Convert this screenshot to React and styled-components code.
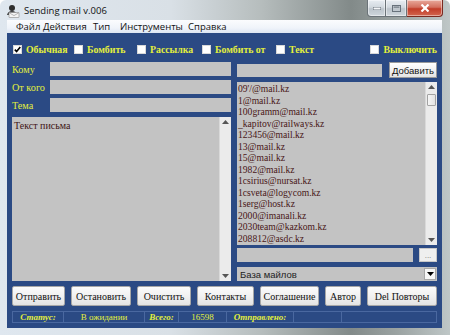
import React from 'react';
import styled, { createGlobalStyle } from 'styled-components';

const serif = `"Liberation Serif", "Times New Roman", serif`;
const sans = `"Liberation Sans", Arial, sans-serif`;
const ui = `"Open Sans", "Noto Sans", sans-serif`;

const yellow = '#e3ef3c';
const fieldGray = '#c3c3c3';

const GlobalStyle = createGlobalStyle`
  html, body {
    margin: 0;
    padding: 0;
    background: #ffffff;
  }
  body {
    width: 450px;
    height: 335px;
    overflow: hidden;
  }
`;

const Window = styled.div`
  width: 450px;
  height: 335px;
  box-sizing: border-box;
  display: flex;
  flex-direction: column;
  border-radius: 6px 6px 0 0;
  background: linear-gradient(90deg, #dfe7ef 0%, #d9e0e6 38%, #b6bdbd 58%, #828a89 78%, #9aa2a1 88%, #bfc7c7 100%);
  overflow: hidden;
`;

const TitleBar = styled.div`
  height: 20px;
  display: flex;
  align-items: flex-start;
  flex-shrink: 0;
`;

const AppIcon = styled.div`
  width: 14px;
  height: 14px;
  margin: 4px 0 0 6px;

  svg {
    display: block;
  }
`;

const Title = styled.div`
  margin: 4px 0 0 4px;
  font-family: ${ui};
  font-size: 9.5px;
  line-height: 14px;
  color: #111;
`;

const Caption = styled.div`
  display: flex;
  margin-left: auto;
  margin-right: 7px;
`;

const CapButton = styled.div`
  width: ${(p) => p.$w}px;
  height: 17px;
  box-sizing: border-box;
  border: 1px solid ${(p) => (p.$close ? '#7a2a20' : '#6b7378')};
  border-top: none;
  border-left-width: ${(p) => (p.$first ? 1 : 0)}px;
  border-radius: ${(p) => p.$radius};
  background: ${(p) =>
    p.$close
      ? 'linear-gradient(180deg, #e9a99c 0%, #d3705f 45%, #c23c28 55%, #d2664f 100%)'
      : 'linear-gradient(180deg, #e8edf2 0%, #d2d9df 45%, #bcc4cb 55%, #cfd6dc 100%)'};
  display: flex;
  align-items: center;
  justify-content: center;
  box-shadow: inset 0 0 0 1px rgba(255, 255, 255, 0.45);

  svg {
    display: block;
  }
`;

const Frame = styled.div`
  flex: 1;
  display: flex;
  flex-direction: column;
  padding: 0 8px 7px 7px;
`;

const MenuBar = styled.div`
  height: 13px;
  display: flex;
  align-items: center;
  padding-left: 9px;
  background: linear-gradient(180deg, #fbfcfe 0%, #f0f4fa 60%, #dde6f3 100%);
  font-family: ${ui};
  font-size: 9.5px;
  color: #111;
`;

const MenuItem = styled.span`
  width: ${(p) => (p.$w ? `${p.$w}px` : 'auto')};
  white-space: nowrap;
`;

const Client = styled.div`
  flex: 1;
  display: flex;
  flex-direction: column;
  padding: 9px 5px 5px 5px;
  background: #2b4a84;
`;

const CheckRow = styled.div`
  height: 14px;
  display: flex;
  align-items: center;
`;

const CheckItem = styled.label`
  width: ${(p) => (p.$w ? `${p.$w}px` : 'auto')};
  margin-left: ${(p) => (p.$right ? 'auto' : '0')};
  display: flex;
  align-items: center;
  gap: 4px;
  font-family: ${serif};
  font-weight: bold;
  font-size: 9.8px;
  color: ${yellow};
  white-space: nowrap;
`;

const Box = styled.span`
  width: 9px;
  height: 9px;
  margin-left: 1px;
  box-sizing: border-box;
  background: #ffffff;
  border: 1px solid #d8d8d8;
  display: flex;
  align-items: center;
  justify-content: center;

  svg {
    display: block;
  }
`;

const MainGrid = styled.div`
  margin-top: 6px;
  height: 219px;
  display: grid;
  grid-template-columns: 219px 200px;
  column-gap: 6px;
`;

const Column = styled.div`
  display: flex;
  flex-direction: column;
  min-height: 0;
`;

const FieldRow = styled.div`
  height: ${(p) => p.$h || 14}px;
  display: flex;
  align-items: center;
  margin-top: ${(p) => p.$mt || 0}px;
  gap: ${(p) => p.$gap || 0}px;
`;

const Label = styled.span`
  width: 38px;
  font-family: ${serif};
  font-size: 10.2px;
  color: ${yellow};
  white-space: nowrap;
`;

const Field = styled.div`
  flex: 1;
  height: ${(p) => p.$h || 14}px;
  background: ${fieldGray};
`;

const MemoBox = styled.div`
  flex: 1;
  margin-top: 5px;
  display: flex;
  background: ${fieldGray};
  min-height: 0;
`;

const MemoText = styled.div`
  flex: 1;
  padding: 3px 2px;
  font-family: ${serif};
  font-size: 10px;
  color: #3f1515;
`;

const ScrollBar = styled.div`
  width: 12px;
  display: flex;
  flex-direction: column;
  align-items: center;
  background: #ebebeb;
  border-left: 1px solid #d9d9d9;
  box-sizing: border-box;
`;

const Arrow = styled.div`
  width: 11px;
  height: 10px;
  display: flex;
  align-items: center;
  justify-content: center;

  svg {
    display: block;
  }
`;

const Thumb = styled.div`
  width: 9px;
  height: 12px;
  margin-top: 2px;
  box-sizing: border-box;
  border: 1px solid #a3a3a3;
  border-radius: 1px;
  background: linear-gradient(90deg, #f6f6f6, #e2e2e2);
`;

const Track = styled.div`
  flex: 1;
`;

const AddButton = styled.div`
  width: 48px;
  height: 16px;
  margin-left: 7px;
  box-sizing: border-box;
  border: 1px solid #9a9a9a;
  background: linear-gradient(180deg, #ffffff 0%, #f2f2f2 50%, #e4e4e4 100%);
  font-family: ${sans};
  font-size: 9.5px;
  color: #111;
  display: flex;
  align-items: center;
  justify-content: center;
`;

const ListBox = styled.div`
  flex: 1;
  margin-top: 4px;
  display: flex;
  background: ${fieldGray};
  min-height: 0;
`;

const ListItems = styled.div`
  flex: 1;
  padding: 1px 0 0 1px;
  overflow: hidden;
`;

const ListItem = styled.div`
  height: 11.5px;
  line-height: 11.5px;
  font-family: ${serif};
  font-size: 9.6px;
  color: #481616;
  white-space: nowrap;
`;

const SmallButton = styled.div`
  width: 18px;
  height: 14px;
  margin-left: 6px;
  box-sizing: border-box;
  border: 1px solid #c8c8c8;
  background: #efefef;
  font-family: ${sans};
  font-size: 8px;
  color: #777;
  display: flex;
  align-items: flex-end;
  justify-content: center;
  padding-bottom: 2px;
  line-height: 6px;
`;

const Combo = styled.div`
  height: 14px;
  margin-top: 5px;
  display: flex;
  align-items: center;
  background: ${fieldGray};
  font-family: ${sans};
  font-size: 9.5px;
  color: #222;
  padding-left: 3px;
`;

const ComboText = styled.span`
  flex: 1;
`;

const DropButton = styled.div`
  width: 12px;
  height: 12px;
  margin-right: 1px;
  box-sizing: border-box;
  border: 1px solid #a8a8a8;
  background: #f7f7f7;
  display: flex;
  align-items: center;
  justify-content: center;

  svg {
    display: block;
  }
`;

const ButtonRow = styled.div`
  height: 20px;
  margin-top: 5px;
  display: flex;
  justify-content: space-between;
`;

const Button = styled.div`
  width: ${(p) => p.$w}px;
  height: 20px;
  box-sizing: border-box;
  border: 1px solid #a7a7a7;
  border-radius: 2px;
  background: linear-gradient(180deg, #fbfbfb 0%, #f1f1f1 50%, #e3e3e3 100%);
  font-family: ${serif};
  font-size: 10px;
  color: #111;
  display: flex;
  align-items: center;
  justify-content: center;
  white-space: nowrap;
`;

const StatusBar = styled.div`
  height: 12px;
  margin-top: 5px;
  display: grid;
  grid-template-columns: 50px 81px 34px 48px 67px 48px 1fr;
  border: 1px solid #4a68a0;
  box-sizing: border-box;
`;

const StatusCell = styled.div`
  border-left: ${(p) => (p.$first ? 'none' : '1px solid #4a68a0')};
  font-family: ${serif};
  font-size: 9px;
  font-weight: ${(p) => (p.$label ? 'bold' : 'normal')};
  font-style: ${(p) => (p.$label ? 'italic' : 'normal')};
  color: ${yellow};
  text-align: center;
  line-height: 10px;
  white-space: nowrap;
`;

const UpArrow = () => (
  <svg width="7" height="4" viewBox="0 0 7 4">
    <path d="M0 4 L3.5 0 L7 4 Z" fill="#555" />
  </svg>
);

const DownArrow = ({ color = '#555' }) => (
  <svg width="7" height="4" viewBox="0 0 7 4">
    <path d="M0 0 L3.5 4 L7 0 Z" fill={color} />
  </svg>
);

const emails = [
  "09'/@mail.kz",
  '1@mail.kz',
  '100gramm@mail.kz',
  '_kapitov@railways.kz',
  '123456@mail.kz',
  '13@mail.kz',
  '15@mail.kz',
  '1982@mail.kz',
  '1csirius@nursat.kz',
  '1csveta@logycom.kz',
  '1serg@host.kz',
  '2000@imanali.kz',
  '2030team@kazkom.kz',
  '208812@asdc.kz',
];

const menus = [
  { name: 'Файл', w: 27 },
  { name: 'Действия', w: 50 },
  { name: 'Тип', w: 27 },
  { name: 'Инструменты', w: 68 },
  { name: 'Справка' },
];

const checks = [
  { name: 'Обычная', w: 61, on: true },
  { name: 'Бомбить', w: 63 },
  { name: 'Рассылка', w: 65 },
  { name: 'Бомбить от', w: 74 },
  { name: 'Текст' },
];

const buttons = [
  { name: 'Отправить', w: 53 },
  { name: 'Остановить', w: 60 },
  { name: 'Очистить', w: 54 },
  { name: 'Контакты', w: 57 },
  { name: 'Соглашение', w: 59 },
  { name: 'Автор', w: 36 },
  { name: 'Del Повторы', w: 70 },
];

function Check({ on }) {
  return (
    <Box>
      {on && (
        <svg width="7" height="7" viewBox="0 0 7 7">
          <path d="M0.8 3.6 L2.6 5.6 L6.3 1" stroke="#000" strokeWidth="1.6" fill="none" />
        </svg>
      )}
    </Box>
  );
}

export default function App() {
  return (
    <>
      <GlobalStyle />
      <Window>
        <TitleBar>
          <AppIcon>
            <svg width="14" height="14" viewBox="0 0 14 14">
              <circle cx="6" cy="4" r="3" fill="#2e2e2e" />
              <path d="M1 11 Q2 7 6 7 Q10 7 11 11 Z" fill="#3a3a3a" />
              <rect x="3" y="8.5" width="10" height="5" rx="0.5" fill="#f4f4f4" stroke="#8a8a8a" strokeWidth="0.6" />
              <path d="M3.2 8.8 L8 11.6 L12.8 8.8" stroke="#8a8a8a" strokeWidth="0.6" fill="none" />
            </svg>
          </AppIcon>
          <Title>Sending mail v.006</Title>
          <Caption>
            <CapButton $w={19} $first $radius="0 0 0 4px">
              <svg width="8" height="3" viewBox="0 0 8 3">
                <rect x="0" y="0" width="8" height="3" fill="#f4f6f8" stroke="#4a5560" strokeWidth="0.8" />
              </svg>
            </CapButton>
            <CapButton $w={21} $radius="0">
              <svg width="9" height="7" viewBox="0 0 9 7">
                <rect x="0.5" y="0.5" width="8" height="6" fill="none" stroke="#68727c" strokeWidth="1" />
                <rect x="1.5" y="1.5" width="6" height="1.2" fill="#68727c" />
              </svg>
            </CapButton>
            <CapButton $w={36} $close $radius="0 0 4px 0">
              <svg width="10" height="8" viewBox="0 0 10 8">
                <path d="M1.5 0.5 L8.5 7.5 M8.5 0.5 L1.5 7.5" stroke="#ffffff" strokeWidth="2.2" />
              </svg>
            </CapButton>
          </Caption>
        </TitleBar>
        <Frame>
          <MenuBar>
            {menus.map((m) => (
              <MenuItem key={m.name} $w={m.w}>
                {m.name}
              </MenuItem>
            ))}
          </MenuBar>
          <Client>
            <CheckRow>
              {checks.map((c) => (
                <CheckItem key={c.name} $w={c.w}>
                  <Check on={c.on} />
                  {c.name}
                </CheckItem>
              ))}
              <CheckItem $right>
                <Check />
                Выключить
              </CheckItem>
            </CheckRow>

            <MainGrid>
              <Column>
                <FieldRow>
                  <Label>Кому</Label>
                  <Field />
                </FieldRow>
                <FieldRow $mt={4}>
                  <Label>От кого</Label>
                  <Field />
                </FieldRow>
                <FieldRow $mt={4}>
                  <Label>Тема</Label>
                  <Field />
                </FieldRow>
                <MemoBox>
                  <MemoText>Текст письма</MemoText>
                  <ScrollBar>
                    <Arrow>
                      <UpArrow />
                    </Arrow>
                    <Track />
                    <Arrow>
                      <DownArrow />
                    </Arrow>
                  </ScrollBar>
                </MemoBox>
              </Column>

              <Column>
                <FieldRow $h={16}>
                  <Field $h={13} />
                  <AddButton>Добавить</AddButton>
                </FieldRow>
                <ListBox>
                  <ListItems>
                    {emails.map((e) => (
                      <ListItem key={e}>{e}</ListItem>
                    ))}
                  </ListItems>
                  <ScrollBar>
                    <Arrow>
                      <UpArrow />
                    </Arrow>
                    <Thumb />
                    <Track />
                    <Arrow>
                      <DownArrow />
                    </Arrow>
                  </ScrollBar>
                </ListBox>
                <FieldRow $mt={3}>
                  <Field />
                  <SmallButton>...</SmallButton>
                </FieldRow>
                <Combo>
                  <ComboText>База майлов</ComboText>
                  <DropButton>
                    <DownArrow color="#000" />
                  </DropButton>
                </Combo>
              </Column>
            </MainGrid>

            <ButtonRow>
              {buttons.map((b) => (
                <Button key={b.name} $w={b.w}>
                  {b.name}
                </Button>
              ))}
            </ButtonRow>

            <StatusBar>
              <StatusCell $first $label>Статус:</StatusCell>
              <StatusCell>В ожидании</StatusCell>
              <StatusCell $label>Всего:</StatusCell>
              <StatusCell>16598</StatusCell>
              <StatusCell $label>Отправлено:</StatusCell>
              <StatusCell />
              <StatusCell />
            </StatusBar>
          </Client>
        </Frame>
      </Window>
    </>
  );
}
